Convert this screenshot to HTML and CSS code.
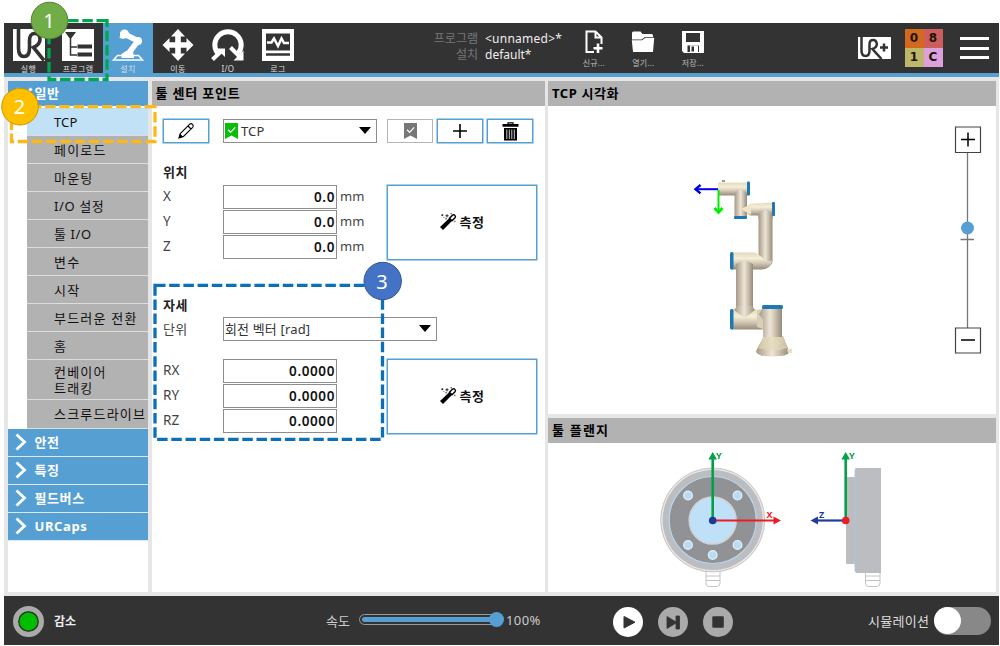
FILE: index.html
```html
<!DOCTYPE html>
<html lang="ko">
<head>
<meta charset="utf-8">
<title>TCP</title>
<link rel="stylesheet" href="styles.css">
</head>
<body>
<svg class="defs" width="0" height="0">
  <defs>
    <linearGradient id="tubeV" x1="0" x2="1" y1="0" y2="0"><stop offset="0" stop-color="#a59a89"/><stop offset=".3" stop-color="#d3c8b6"/><stop offset=".48" stop-color="#eee5d8"/><stop offset=".7" stop-color="#cdc2b0"/><stop offset="1" stop-color="#968b7a"/></linearGradient>
    <linearGradient id="tubeH" x1="0" x2="0" y1="0" y2="1"><stop offset="0" stop-color="#e3dabc"/><stop offset=".35" stop-color="#f6efd8"/><stop offset=".65" stop-color="#d0c5b2"/><stop offset="1" stop-color="#978c7b"/></linearGradient>
    <symbol id="mark" viewBox="0 0 13 16"><path d="M0 0H13V16L6.5 12.5 0 16Z" fill="currentColor"/><path d="M3 6.8 5.6 9.3 10.2 4.3" fill="none" stroke="#fff" stroke-width="1.2"/></symbol>
    <symbol id="wand" viewBox="0 0 18 18"><path d="M1 14 10.500 5 13.200 7.700 4 17Z" fill="#000"/><path d="M10.5 5.2 13.4 2.2Q14.8 1.2 15.9 2.4 17 3.6 16 4.8L13 7.7Z" fill="#fff" stroke="#000" stroke-width="1.4"/><path d="M8 1.200V4.400M6.400 2.800H9.600M3.300 1.200V3.200M2.300 2.200H4.300M6.400 5.800H8M15.800 7.600V9.200M11.500.8H13M4.600 4.600H5.400" stroke="#000" stroke-width=".8"/></symbol>
    <symbol id="next" viewBox="0 0 12 18"><path d="M1.5 1.5 9.5 9 1.5 16.5" fill="none" stroke="#fff" stroke-width="2.8"/></symbol>
  </defs>
</svg>

<div class="app">
  <header class="topbar">
    <nav class="tabs">
      <a class="tab">
        <svg width="32" height="32" viewBox="0 0 32 32"><path d="M0 0H32V32H0Z" fill="#fff"/><path d="M5.500 0V19Q5.500 27.500 11 27.500T16.500 19V11.500Q16.500 4.500 21.800 4.500T27 10.500Q27 15.500 20.500 18.500L31 31.500" fill="none" stroke="#333" stroke-width="3.600"/></svg>
        <span>실행</span></a>
      <a class="tab">
        <svg width="32" height="32" viewBox="0 0 32 32"><rect width="32" height="32" fill="#fff"/><path d="M3 3H14L8.500 10.500Z" fill="#333"/><path d="M8.500 10V26H15M8.500 18H15" fill="none" stroke="#333" stroke-width="1.500"/><path d="M15.500 15.500H30V19.500H15.500ZM15.500 23.500H30V27.500H15.500Z" fill="#333"/></svg>
        <span>프로그램</span></a>
      <a class="tab tab-on">
        <svg width="32" height="32" viewBox="0 0 32 32"><path d="M5.500 26.500 1.500 31H30.500L26.500 26.500Z" fill="none" stroke="#fff" stroke-width="1.500"/><path d="M9.500 29V25L15 21.500H21L22 29Z" fill="#fff"/><path d="M17.500 23 26 12 12.500 5" fill="none" stroke="#fff" stroke-width="5.500" stroke-linejoin="round"/><circle cx="26" cy="12" r="4" fill="#fff"/><circle cx="12.500" cy="5" r="4.500" fill="#fff"/><path d="M9 2 7.500 9 12 10" fill="#fff"/></svg>
        <span>설치</span></a>
      <a class="tab">
        <svg width="32" height="32" viewBox="0 0 32 32"><path d="M16 0 23 7.500H18.800V13.200H24.500V9L31.500 16 24.500 23V18.800H18.800V24.500H23L16 32 9 24.500H13.200V18.800H7.500V23L.5 16 7.500 9V13.200H13.200V7.500H9Z" fill="#fff"/></svg>
        <span>이동</span></a>
      <a class="tab">
        <svg width="34" height="32" viewBox="0 0 34 32"><path d="M6.500 24A13.200 13.200 0 1 1 27.500 24" fill="none" stroke="#fff" stroke-width="5"/><path d="M1.500 30.500 10 22.500" stroke="#fff" stroke-width="4"/><path d="M5.500 19.500H14V28L11 25 8 22.500Z" fill="#fff"/><path d="M19.500 18.500 28 27" stroke="#fff" stroke-width="4"/><path d="M32.500 21.500V31.500H22.500Z" fill="#fff"/></svg>
        <span>I/O</span></a>
      <a class="tab">
        <svg width="32" height="32" viewBox="0 0 32 32"><path d="M0 0H32V32H0Z" fill="#fff"/><path d="M4 4.500H28V21.500H4Z" fill="#333"/><path d="M5 13.500H9.500L12 9.500 16 17 19.500 9.500 22 14H27" fill="none" stroke="#fff" stroke-width="2.500"/><path d="M4 25.500H28" stroke="#333" stroke-width="2.500"/></svg>
        <span>로그</span></a>
    </nav>
    <dl class="files">
      <dt>프로그램</dt><dd class="wide">&lt;unnamed&gt;*</dd>
      <dt>설치</dt><dd>default*</dd>
    </dl>
    <div class="actions">
      <a class="tool"><svg width="18" height="24" viewBox="0 0 18 24"><path d="M9 22H1.500V1.500H10.500L16.500 7.500V14M10.500 1.500V7.500H16.500" fill="none" stroke="#fff" stroke-width="2"/><path d="M13 13.500V23M8.500 18.300H17.500" stroke="#fff" stroke-width="2.600"/></svg><span>신규...</span></a>
      <a class="tool"><svg width="24" height="24" viewBox="0 0 24 24"><path d="M1 8V3Q1 1.500 2.500 1.500H9.500L11.500 4H20.500Q22 4 22 5.500V7L14 7 10.500 9.500H1Z" fill="#fff"/><path d="M.8 10.200H11L14.500 7.700H23.200L22 22H2Z" fill="#fff"/></svg><span>열기...</span></a>
      <a class="tool"><svg width="24" height="24" viewBox="0 0 24 24"><path d="M1 1H23V23H3L1 21Z" fill="#fff"/><path d="M5 3H19V12H5ZM6.500 15.500H18V22H6.500Z" fill="#333"/><path d="M9 15.500H17V22H9Z" fill="#fff"/><path d="M10.500 16.500H13V21.500H10.500Z" fill="#333"/></svg><span>저장...</span></a>
    </div>
    <svg class="urplus" width="33" height="22" viewBox="0 0 33 22"><path d="M0 0H33V22H0Z" fill="#fff"/><path d="M3.500 0V13.500Q3.500 19 7.500 19T11.500 13.500V7.500Q11.500 3 15 3T18.800 7Q18.800 10.500 14.500 12L23.500 22" fill="none" stroke="#333" stroke-width="2.500"/><path d="M22 10.500H30M26 6.500V14.500" stroke="#333" stroke-width="2.500"/></svg>
    <div class="code"><b>0</b><b>8</b><b>1</b><b>C</b></div>
    <div class="menu"><i></i><i></i><i></i></div>
  </header>

  <main class="panels">
    <aside class="side panel">
      <div class="group first"><svg width="18" height="12" viewBox="0 0 18 12"><path d="M1.500 1.500 9 9.500 16.500 1.500" fill="none" stroke="#fff" stroke-width="2.800"/></svg>일반</div>
      <ul class="items">
        <li class="on">TCP</li><li>페이로드</li><li>마운팅</li><li>I/O 설정</li><li>툴 I/O</li><li>변수</li><li>시작</li><li>부드러운 전환</li><li>홈</li><li class="two">컨베이어<br>트래킹</li><li class="last">스크루드라이브</li>
      </ul>
      <div class="group"><svg width="12" height="18"><use href="#next"/></svg>안전</div>
      <div class="group"><svg width="12" height="18"><use href="#next"/></svg>특징</div>
      <div class="group"><svg width="12" height="18"><use href="#next"/></svg>필드버스</div>
      <div class="group"><svg width="12" height="18"><use href="#next"/></svg>URCaps</div>
    </aside>

    <section class="panel center">
      <h2>툴 센터 포인트</h2>
      <div class="form">
        <div class="row">
          <button class="btn edit"><svg width="18" height="18" viewBox="0 0 18 18"><path d="M2 16 3.300 11.500 12.500 2.300Q14 1 15.500 2.300 17 3.800 15.700 5.300L6.500 14.500ZM11 4 14 7" fill="none" stroke="#000" stroke-width="1.100"/><path d="M1.500 16.500 3 11.800 6.200 14.800Z" fill="#000"/></svg></button>
          <div class="select tcp"><svg class="green" width="13" height="16"><use href="#mark"/></svg><span>TCP</span><i class="caret"></i></div>
          <button class="btn off"><svg width="13" height="16"><use href="#mark"/></svg></button>
          <button class="btn"><svg width="14" height="14" viewBox="0 0 14 14"><path d="M7 0V14M0 7H14" stroke="#000" stroke-width="1.600"/></svg></button>
          <button class="btn"><svg width="17" height="19" viewBox="0 0 17 19"><path d="M6 2V.8H11V2" fill="none" stroke="#000" stroke-width="1.200"/><path d="M.5 2H16.500V4.800H.5ZM2 6H15V18.500H2Z" fill="#000"/><path d="M4.800 7.500V17M7.300 7.500V17M9.800 7.500V17M12.300 7.500V17" stroke="#fff" stroke-width=".8"/></svg></button>
        </div>
        <h3 class="h-pos">위치</h3>
        <div class="block">
          <div class="fields">
            <label>X</label><div class="num">0.0</div><em>mm</em>
            <label>Y</label><div class="num">0.0</div><em>mm</em>
            <label>Z</label><div class="num">0.0</div><em>mm</em>
          </div>
          <button class="measure"><svg width="18" height="18"><use href="#wand"/></svg>측정</button>
        </div>
        <h3 class="h-rot">자세</h3>
        <div class="unit"><label>단위</label><div class="select"><span>회전 벡터 [rad]</span><i class="caret"></i></div></div>
        <div class="block">
          <div class="fields">
            <label>RX</label><div class="num">0.0000</div><em></em>
            <label>RY</label><div class="num">0.0000</div><em></em>
            <label>RZ</label><div class="num">0.0000</div><em></em>
          </div>
          <button class="measure"><svg width="18" height="18"><use href="#wand"/></svg>측정</button>
        </div>
      </div>
    </section>

    <div class="right">
      <section class="panel view">
        <h2>TCP 시각화</h2>
        <svg width="448" height="308" viewBox="548 106 448 308">
          <g class="robot">
            <path d="M764 336H783L789 351Q790 356.500 773 356.500T756 351Z" fill="url(#tubeV)"/>
            <path d="M764 336H783L787.500 348Q773 353 758.500 348Z" fill="#e3d8b4" opacity=".65"/>
            <path d="M787 349H792V353H788Z" fill="#e9dfbe"/>
            <path d="M732 309.500H763V329.500H732Z" fill="url(#tubeH)"/>
            <path d="M757 310H764L769 318V334L763 329 757 327Z" fill="#d9cfb6"/>
            <path d="M763 307H782V337H763V320L759 314Z" fill="url(#tubeV)"/>
            <rect x="762" y="305" width="21" height="4" rx="1.500" fill="#1d78b4"/>
            <rect x="736" y="266" width="17" height="42" fill="url(#tubeV)"/>
            <path d="M734 310 737 306H752L755 310 744.500 318Z" fill="url(#tubeV)"/>
            <rect x="730" y="309" width="3.500" height="20.500" rx="1.500" fill="#1d78b4"/>
            <path d="M758.500 212H772.500V262Q771 267 766 268L758.500 258Z" fill="url(#tubeV)"/>
            <path d="M732 252.500H755L762 257 766 262 772 260.500Q771 269 762 269.500H732Z" fill="url(#tubeH)"/>
            <path d="M736 270V264L744.500 260 753 264V270Z" fill="url(#tubeV)"/>
            <rect x="730" y="252" width="3.500" height="17.500" rx="1.500" fill="#1d78b4"/>
            <path d="M742 209 751 203.500 773 202.500V215.500H750Z" fill="url(#tubeH)"/>
            <path d="M758.500 219V214L765.500 210 772.500 214V219Z" fill="url(#tubeV)"/>
            <path d="M734.500 192H747V217H734.500Z" fill="url(#tubeV)"/>
            <path d="M741 209 751 204V215Z" fill="#eee5ca"/>
            <rect x="734" y="216" width="13" height="3" rx="1" fill="#1d78b4"/>
            <rect x="718" y="182.500" width="30" height="13" fill="url(#tubeH)"/>
            <path d="M734.500 196V193L740.500 189 747 193V196Z" fill="url(#tubeV)"/>
            <path d="M722 180H725V182H722Z" fill="#a59a87"/>
            <rect x="747" y="181.500" width="3" height="14" rx="1" fill="#1d78b4"/>
            <rect x="772" y="202" width="3" height="14" rx="1" fill="#1d78b4"/>
          </g>
          <path d="M718 189.200H697" stroke="#0000e6" stroke-width="2"/><path d="M700.500 185 695.500 189.200 700.500 193.400" fill="none" stroke="#0000e6" stroke-width="2.400"/>
          <path d="M718.500 190V211" stroke="#0e0" stroke-width="2"/><path d="M714.500 208 718.500 212.500 722.500 208" fill="none" stroke="#0e0" stroke-width="2.800"/>
          <path d="M967.500 153V328M960.500 239.500H974" stroke="#777" stroke-width="1.300"/>
          <circle cx="967.500" cy="228" r="6.500" fill="#569fd3"/>
          <path d="M955.500 127H980.500V152.500H955.500ZM955.500 328H980.500V353H955.500Z" fill="#fff" stroke="#444" stroke-width="1.200"/>
          <path d="M961 139.500H975M968 132.500V146.500M961 340H975" stroke="#000" stroke-width="1.500"/>
        </svg>
      </section>
      <section class="panel flange">
        <h2>툴 플랜지</h2>
        <svg width="448" height="149" viewBox="548 443 448 149">
          <g fill="#fff" stroke="#c4c4c4"><path d="M706 571V583Q706 586.500 709 586.500H717Q720 586.500 720 583V571M706 576H720M706 580.500H720"/><path d="M865.500 571V583Q865.500 586.500 868.500 586.500H877Q880 586.500 880 583V571M865.500 576H880M865.500 580.500H880"/></g>
          <circle cx="712.700" cy="520" r="52" fill="#e6e6e6" stroke="#bbb" stroke-width=".8"/>
          <circle cx="712.700" cy="520" r="50" fill="#bcbdc0"/>
          <circle cx="712.700" cy="520" r="43.500" fill="#909295" stroke="#b9d5e8" stroke-width="1.200"/>
          <circle cx="712.700" cy="520.500" r="23.500" fill="#bfe1f8" stroke="#d2d2d2" stroke-width="1.500"/>
          <g fill="#b8dbf8" stroke="#e9eef2" stroke-width="1.300"><circle cx="688" cy="495.500" r="4.300"/><circle cx="737.500" cy="495.500" r="4.300"/><circle cx="688" cy="545" r="4.300"/><circle cx="737.500" cy="545" r="4.300"/><circle cx="712.700" cy="555" r="4.300"/></g>
          <path d="M847 477H855V564H847Q846 564 846 562V479Q846 477 847 477ZM855.500 468H881V573H857Q855 573 855 571V470Z" fill="#bcbdc0"/>
          <path d="M855 470V571" stroke="#a9c9db"/>
          <path d="M712.700 520V458M845.700 520V458" stroke="#00a147" stroke-width="2.600"/>
          <path d="M712.700 452 717 459.500H708.400ZM845.700 452 850 459.500H841.400Z" fill="#00a147"/>
          <path d="M713 520.500H775" stroke="#ed1c24" stroke-width="2.200"/><path d="M781 520.500 773.500 516.500V524.500Z" fill="#ed1c24"/>
          <path d="M845 520.500H817" stroke="#1f3d99" stroke-width="2.200"/><path d="M810.500 520.500 818 516.500V524.500Z" fill="#1f3d99"/>
          <circle cx="712.700" cy="520.500" r="3.800" fill="#1b3b93"/><circle cx="845.700" cy="520.500" r="3.800" fill="#ed1c24"/>
          <g class="axis"><text x="716" y="459" fill="#00a147">Y</text><text x="849" y="459" fill="#00a147">Y</text><text x="766.500" y="518" fill="#ed1c24">X</text><text x="819" y="518" fill="#1f3d99">Z</text></g>
        </svg>
      </section>
    </div>
  </main>

  <footer class="bottom">
    <span class="lamp"></span><b class="state">감소</b>
    <span class="speed-label">속도</span>
    <div class="slider"><div class="fill"></div><span class="knob"></span></div>
    <span class="percent">100%</span>
    <div class="play">
      <svg width="30" height="30" viewBox="0 0 30 30"><circle cx="15" cy="15" r="15" fill="#fff"/><path d="M11 9.500V21L22 15.200Z" fill="#333" stroke="#333" stroke-linejoin="round"/></svg>
      <svg width="30" height="30" viewBox="0 0 30 30"><circle cx="15" cy="15" r="15" fill="#aaa"/><path d="M9 9.500V21.500L18 16V22H21.500V9H18V15Z" fill="#333" stroke="#333" stroke-linejoin="round" stroke-width=".8"/></svg>
      <svg width="30" height="30" viewBox="0 0 30 30"><circle cx="15" cy="15" r="15" fill="#aaa"/><rect x="9.300" y="9.300" width="11.500" height="11.500" rx="1" fill="#333"/></svg>
    </div>
    <span class="sim">시뮬레이션</span><div class="toggle"><i></i></div>
  </footer>
</div>

<svg class="notes" width="1000" height="646" viewBox="0 0 1000 646">
  <g fill="none" stroke-width="3.300" stroke-dasharray="10.500 3.700">
    <path d="M107 20.700H49V79.500H107Z" stroke="#00a651"/>
    <path d="M155 106.700H11.500V141.500H155Z" stroke="#fbb917"/>
    <path d="M155 285.300H382.500V439.300H155Z" stroke="#0b6fba"/>
  </g>
  <g stroke-width="1"><circle cx="49.500" cy="20.500" r="18.300" fill="#70ad47" stroke="#548235"/><circle cx="20" cy="106.700" r="18.300" fill="#ffc000" stroke="#c99700"/><circle cx="382.700" cy="281" r="18.700" fill="#4472c4" stroke="#2f5597"/></g>
  <g class="digits"><text x="49" y="27.500">1</text><text x="19.500" y="113.500">2</text><text x="382" y="288.500">3</text></g>
</svg>
</body>
</html>
```
FILE: styles.css
```css
* { box-sizing: border-box; }
body { margin: 0; width: 1000px; height: 646px; overflow: hidden; position: relative; background: #fff; color: #222; font: 13px/16px "Noto Sans", "Noto Sans CJK KR", sans-serif; }
svg { display: block; flex: none; }
.defs { position: absolute; }
.app { margin: 23px 0 0 4px; width: 995px; height: 622px; display: flex; flex-direction: column; background: #e6e6e6; }

.topbar { height: 54px; flex: none; display: flex; background: #333; border-bottom: 4px solid #569fd3; color: #eee; }
.tabs { display: flex; }
.tab { width: 50px; height: 54px; padding-top: 6px; display: flex; flex-direction: column; align-items: center; font-size: 8px; line-height: 10px; color: #ddd; letter-spacing: .3px; }
.tab span { margin-top: 3px; white-space: nowrap; }
.tab:first-child { width: 49px; }
.tab-on { background: #569fd3; }
.files { margin: 8px 0 0 128px; width: 138px; height: 34px; display: grid; grid-template-columns: 47px 1fr; column-gap: 7px; grid-auto-rows: 16px; font-size: 12px; }
.files dt { color: #777; text-align: right; white-space: nowrap; }
.files dd { margin: 0; }
.wide { letter-spacing: .25px; }
.actions { display: flex; }
.tool { width: 49.500px; padding-top: 7px; display: flex; flex-direction: column; align-items: center; font-size: 8px; line-height: 10px; color: #bbb; letter-spacing: .2px; }
.tool span { margin-top: 4px; }
.urplus { margin: 14px 0 0 140px; }
.code { margin: 6px 0 0 14px; width: 38px; height: 38px; display: grid; grid-template: 1fr 1fr / 1fr 1fr; color: #1c1408; font: bold 12px/19px "DejaVu Sans", sans-serif; text-align: center; }
.code b:nth-child(1) { background: #d2691e; }
.code b:nth-child(2) { background: #cd5c5c; }
.code b:nth-child(3) { background: #bdb76b; }
.code b:nth-child(4) { background: #dda0dd; }
.menu { margin: 14px 0 0 17px; width: 29px; display: flex; flex-direction: column; gap: 6.500px; }
.menu i { height: 3px; background: #fff; }

.panels { flex: 1; min-height: 0; padding: 4px 3px 4px 3.500px; display: flex; }
.panel { background: #fff; }
.panel h2 { margin: 0; height: 25px; padding-left: 4px; background: #b2b2b2; color: #000; font-size: 13px; line-height: 24px; letter-spacing: .8px; }
.side { width: 140px; }
.group { height: 28px; padding: 0 0 2px 7px; display: flex; align-items: center; gap: 8px; border-bottom: 1px solid #dbe9f3; background: #569fd3; color: #fff; font-weight: bold; font-size: 13px; letter-spacing: .6px; }
.group.first { height: 25px; gap: 2px; border: 0; }
.items { list-style: none; margin: 2px 0 0 19px; padding: 0; color: #111; }
.items li { height: 28px; padding: 6px 0 0 27.500px; background: #b2b2b2; border-bottom: 1px solid #ddd; white-space: nowrap; line-height: 16px; letter-spacing: 1.200px; }
.items li:nth-child(4), .items li:nth-child(5) { letter-spacing: .6px; }
.items .on { background: #c1e1f7; letter-spacing: .1px; }
.items .two { height: 40px; padding-top: 4px; }
.items .last { height: 29px; }
.center { margin-left: 4px; width: 393.500px; }
.form { padding: 13px 0 0 11.500px; }
.row { display: flex; height: 24px; }
.btn { width: 46px; height: 24px; margin-right: 4px; padding: 0; display: flex; align-items: center; justify-content: center; background: #fff; border: 1.500px solid #569fd3; box-shadow: 0 0 0 .5px #569fd3; }
.edit { margin-right: 14px; }
.off { border-color: #b5b5b5; box-shadow: none; color: #777; }
.select { height: 24px; padding: 0 5px 1px 1px; display: flex; align-items: center; background: #fff; border: 1px solid #8d8d8d; color: #333; letter-spacing: .15px; }
.tcp { width: 154px; margin-right: 10px; }
.green { color: #09bd09; margin-right: 3px; }
.caret { margin-left: auto; border: 6px solid transparent; border-top: 7px solid #000; border-bottom: 0; }
h3 { margin: 0; font-size: 13px; line-height: 16px; letter-spacing: .6px; }
.h-pos { margin-top: 21px; }
.block { display: flex; margin-top: 5px; }
.fields { width: 224px; display: grid; grid-template-columns: 60px 114px 1fr; grid-auto-rows: 24px; row-gap: 1px; line-height: 23px; color: #444; }
.fields label { font-size: 13.500px; }
.fields em { font-style: normal; padding-left: 3px; }
.num { border: 1px solid #8d8d8d; background: #fff; color: #111; text-align: right; font-weight: 600; font-size: 13.500px; line-height: 22px; padding-right: 1px; letter-spacing: .6px; }
.measure { width: 150px; height: 75px; padding: 0 0 1px; display: flex; align-items: center; justify-content: center; gap: 2px; background: #fff; border: 1.500px solid #569fd3; box-shadow: 0 0 0 .5px #569fd3; color: #111; font: bold 13px/16px "Noto Sans CJK KR", sans-serif; letter-spacing: .6px; }
.h-rot { margin-top: 37px; }
.unit { display: flex; margin-top: 4px; align-items: center; color: #444; }
.unit label { width: 60px; letter-spacing: .4px; }
.unit .select { width: 214px; }
.unit + .block { margin-top: 18px; }
.right { width: 448px; margin-left: 3px; display: flex; flex-direction: column; gap: 4px; }
.right h2 { letter-spacing: .6px; }
.flange h2 { letter-spacing: 1.200px; }
.view { height: 333px; }
.flange { flex: 1; }
.axis { font: bold 9px "Noto Sans", sans-serif; }

.bottom { height: 49px; flex: none; display: flex; align-items: center; background: #333; color: #ccc; }
.lamp { width: 31px; height: 31px; margin: 2px 0 0 9px; border-radius: 50%; background: #00bd00; border: 5px solid #aaa; box-shadow: inset 0 0 0 1.500px #333; }
.state { width: 272px; margin: 3px 0 0 10px; color: #eee; font-size: 12px; }
.speed-label { width: 33px; }
.slider { width: 143px; height: 11px; margin: -3px 4px 0 0; padding: 2px; position: relative; border: 1px solid #999; border-radius: 6px; }
.fill { height: 5px; border-radius: 3px; background: #569fd3; }
.knob { position: absolute; right: -3px; top: -3px; width: 15px; height: 15px; border-radius: 50%; background: #569fd3; }
.percent { width: 107px; margin-top: -1px; letter-spacing: .4px; }
.play { display: flex; gap: 15px; margin-top: 3px; width: 255px; }
.sim { width: 66px; white-space: nowrap; color: #ddd; font-size: 13px; letter-spacing: .3px; }
.toggle { width: 57px; height: 28px; border-radius: 14px; background: #888; }
.toggle i { display: block; width: 27px; height: 27px; border-radius: 50%; background: #fff; }

.notes { position: absolute; left: 0; top: 0; }
.digits { fill: #fff; font: 20px "Noto Sans", sans-serif; text-anchor: middle; }
```
